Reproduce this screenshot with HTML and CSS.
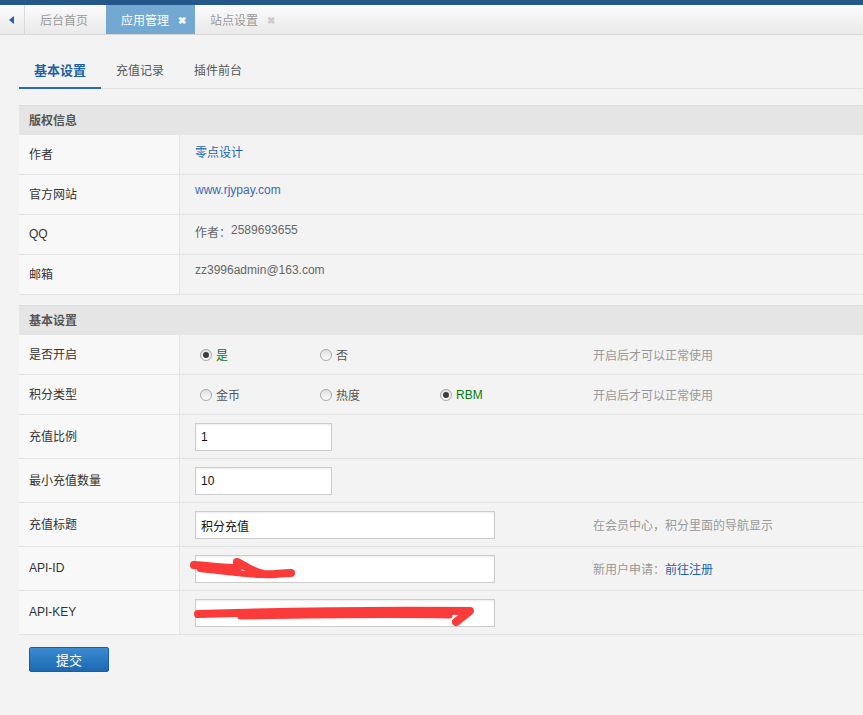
FILE: index.html
```html
<!DOCTYPE html>
<html lang="zh-CN">
<head>
<meta charset="utf-8">
<title>应用管理</title>
<link rel="stylesheet" href="styles.css">
</head>
<body>
<div class="topbar"></div>
<div class="tabbar">
  <div class="nav-prev"><span class="tri"></span></div>
  <div class="tab tab-home">后台首页</div>
  <div class="tab active">应用管理<span class="close">✖</span></div>
  <div class="tab">站点设置<span class="close">✖</span></div>
</div>
<main class="content">
  <nav class="subtabs">
    <a class="subtab active">基本设置</a>
    <a class="subtab">充值记录</a>
    <a class="subtab">插件前台</a>
  </nav>

  <section class="panel">
    <div class="panel-head">版权信息</div>
    <div class="row"><div class="label">作者</div><div class="value wide"><a class="link">零点设计</a></div></div>
    <div class="row"><div class="label">官方网站</div><div class="value wide"><a class="link site">www.rjypay.com</a></div></div>
    <div class="row"><div class="label latin">QQ</div><div class="value wide muted">作者：<span class="latin">2589693655</span></div></div>
    <div class="row"><div class="label">邮箱</div><div class="value wide muted latin">zz3996admin@163.com</div></div>
  </section>

  <section class="panel panel-gap">
    <div class="panel-head">基本设置</div>
    <div class="row">
      <div class="label">是否开启</div>
      <div class="value field">
        <span class="opt"><span class="radio on"></span><span class="green">是</span></span>
        <span class="opt"><span class="radio"></span>否</span>
      </div>
      <div class="tip">开启后才可以正常使用</div>
    </div>
    <div class="row">
      <div class="label">积分类型</div>
      <div class="value field">
        <span class="opt"><span class="radio"></span>金币</span>
        <span class="opt"><span class="radio"></span>热度</span>
        <span class="opt"><span class="radio on"></span><span class="green latin">RBM</span></span>
      </div>
      <div class="tip">开启后才可以正常使用</div>
    </div>
    <div class="row tall">
      <div class="label">充值比例</div>
      <div class="value field"><span class="input short latin">1</span></div>
      <div class="tip"></div>
    </div>
    <div class="row tall">
      <div class="label">最小充值数量</div>
      <div class="value field"><span class="input short latin">10</span></div>
      <div class="tip"></div>
    </div>
    <div class="row tall">
      <div class="label">充值标题</div>
      <div class="value field"><span class="input long">积分充值</span></div>
      <div class="tip">在会员中心，积分里面的导航显示</div>
    </div>
    <div class="row tall">
      <div class="label latin">API-ID</div>
      <div class="value field redacted">
        <span class="input long latin"></span>
        <svg class="scribble" width="300" height="44" viewBox="0 0 300 44"><path d="M14 18 C30 19 45 21 58 21 L57 15 C64 18 72 25 84 27 C92 28 100 26 111 26" fill="none" stroke="#fb3a3a" stroke-width="8" stroke-linecap="round" stroke-linejoin="round"/><path d="M20 22 C40 24 60 27 80 28" fill="none" stroke="#fb3a3a" stroke-width="6" stroke-linecap="round"/></svg>
      </div>
      <div class="tip">新用户申请：<a class="link">前往注册</a></div>
    </div>
    <div class="row tall">
      <div class="label latin">API-KEY</div>
      <div class="value field redacted">
        <span class="input long latin"></span>
        <svg class="scribble" width="300" height="44" viewBox="0 0 300 44"><path d="M18 23 C80 21 160 19 290 20 L276 31" fill="none" stroke="#fb3a3a" stroke-width="8" stroke-linecap="round" stroke-linejoin="round"/><path d="M60 26 C120 25 200 24 270 25" fill="none" stroke="#fb3a3a" stroke-width="5" stroke-linecap="round"/></svg>
      </div>
      <div class="tip"></div>
    </div>
  </section>

  <button class="submit">提交</button>
</main>
</body>
</html>
```

FILE: styles.css
```css
* { box-sizing: border-box; }
html, body { margin: 0; padding: 0; }
body {
  background: #f3f3f3;
  font-family: "Noto Sans CJK SC", "Liberation Sans", sans-serif;
  font-size: 12px;
  color: #333;
  width: 863px;
  overflow: hidden;
}
.latin { font-family: "Liberation Sans", "Noto Sans CJK SC", sans-serif; }

.topbar { height: 5px; background: #24568a; }

.tabbar {
  display: flex;
  height: 30px;
  background: linear-gradient(#fbfbfb, #e9e9e9);
  border-bottom: 1px solid #d6d6d6;
}
.nav-prev {
  width: 25px;
  border-right: 1px solid #dadada;
  display: flex;
  align-items: center;
  justify-content: center;
}
.tri {
  width: 0; height: 0;
  border-top: 4px solid transparent;
  border-bottom: 4px solid transparent;
  border-right: 5px solid #1f63b0;
  margin-left: -2px;
}
.tab {
  display: flex;
  align-items: center;
  padding: 0 9px 0 15px;
  color: #999;
  font-size: 12px;
  line-height: 29px;
}
.tab-home { padding-right: 18px; }
.tab.active { background: #73a8d2; color: #fff; }
.close { font-size: 10px; margin-left: 9px; color: #ccc; font-weight: bold; }
.tab.active .close { color: #fff; }

.content { padding: 17px 0 40px 19px; }

.subtabs {
  display: flex;
  border-bottom: 1px solid #e2e2e2;
  height: 37px;
}
.subtab {
  padding: 0 15px;
  line-height: 35px;
  height: 37px;
  color: #555;
  font-size: 12px;
  border-bottom: 2px solid transparent;
  margin-bottom: -1px;
}
.subtab.active {
  color: #1d5fa6;
  font-weight: bold;
  font-size: 13px;
  border-bottom-color: #2b6cb0;
}

.panel { margin-top: 16px; }
.panel-gap { margin-top: 10px; }
.panel-head {
  height: 30px;
  line-height: 28px;
  background: #e5e5e5;
  border-top: 1px solid #dcdcdc;
  padding-left: 10px;
  font-weight: bold;
  color: #555;
}
.row {
  display: grid;
  grid-template-columns: 161px 398px 1fr;
  height: 40px;
  border-bottom: 1px solid #e3e3e3;
}
.row.tall { height: 44px; }
.label {
  background: #f8f8f8;
  border-right: 1px solid #e3e3e3;
  padding-left: 10px;
  padding-bottom: 2px;
  display: flex;
  align-items: center;
  color: #333;
}
.value {
  padding-left: 15px;
  display: flex;
  align-items: center;
  color: #666;
  position: relative;
}
.value.wide { grid-column: 2 / 4; align-items: flex-start; padding-top: 8px; }
.muted { color: #666; }
.link { color: #1c62ab; text-decoration: none; }
.link.site { color: #3b67b5; font-family: "Liberation Sans", sans-serif; }
.tip {
  padding-left: 15px;
  display: flex;
  align-items: center;
  color: #999;
}

.opt {
  display: inline-flex;
  align-items: center;
  width: 120px;
  color: #555;
}
.radio {
  width: 12px; height: 12px;
  border-radius: 50%;
  border: 1px solid #a9a9a9;
  background: linear-gradient(#e2e2e2, #fafafa);
  margin: 0 4px 0 5px;
  position: relative;
  flex: none;
}
.radio.on::after {
  content: "";
  position: absolute;
  left: 2px; top: 2px;
  width: 6px; height: 6px;
  border-radius: 50%;
  background: #3c3c3c;
}
.green { color: #0a7a0a; }

.input {
  display: flex;
  align-items: center;
  height: 28px;
  background: #fff;
  border: 1px solid #cccccc;
  box-shadow: inset 0 1px 2px rgba(0,0,0,0.08);
  padding-left: 5px;
  color: #111;
  font-size: 12px;
}
.input.short { width: 137px; margin-top: 1px; }
.input.long { width: 300px; margin-top: 1px; }

.scribble { position: absolute; left: 0; top: 0; }

.submit {
  margin: 12px 0 0 10px;
  width: 80px;
  height: 25px;
  border: 1px solid #1a5e9e;
  border-radius: 2px;
  background: linear-gradient(#3b8ad2, #1c69b1);
  color: #fff;
  font-family: "Noto Sans CJK SC", sans-serif;
  font-size: 13px;
  padding: 0;
}
```
